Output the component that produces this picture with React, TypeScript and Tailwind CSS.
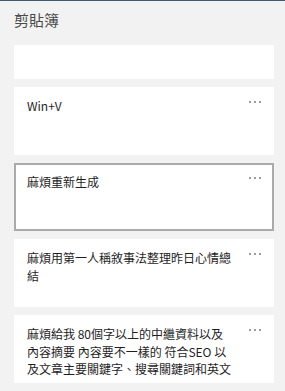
import React from "react";

const items: { text: string; selected?: boolean }[] = [
  { text: "Win+V" },
  { text: "麻煩重新生成", selected: true },
  { text: "麻煩用第一人稱敘事法整理昨日心情總結" },
  {
    text: "麻煩給我 80個字以上的中繼資料以及 內容摘要 內容要不一樣的 符合SEO 以及文章主要關鍵字、搜尋關鍵詞和英文",
  },
];

function Dots() {
  return (
    <div className="mt-[4px] flex h-[2px] w-[12px] shrink-0 gap-[3px]">
      <span className="h-[2px] w-[2px] bg-[#9c9c9c]" />
      <span className="h-[2px] w-[2px] bg-[#9c9c9c]" />
      <span className="h-[2px] w-[2px] bg-[#9c9c9c]" />
    </div>
  );
}

export default function App() {
  return (
    <div
      className="h-[391px] w-[285px] overflow-hidden border-t border-[#3c5a73] bg-[#f2f2f2]"
      style={{ fontFamily: '"Noto Sans CJK TC", "Noto Sans", sans-serif' }}
    >
      <div className="h-[44px] pl-[14px] pt-[9px] text-[15px] leading-[20px] text-[#4a4a4a]">
        剪貼簿
      </div>
      <div className="flex flex-col gap-[8px] pl-[14px] pr-[11px]">
        <div className="h-[34px] bg-white" />
        {items.map((it, i) => (
          <div
            key={i}
            className={
              it.selected
                ? "flex h-[68px] gap-[14px] border-2 border-[#ababab] bg-white px-[11px] pt-[8px]"
                : "flex h-[68px] gap-[14px] border-2 border-white bg-white px-[11px] pt-[8px]"
            }
          >
            <div className="w-[208px] text-[12px] leading-[17.5px] text-[#1e1e1e]">
              {it.text}
            </div>
            <Dots />
          </div>
        ))}
      </div>
    </div>
  );
}
